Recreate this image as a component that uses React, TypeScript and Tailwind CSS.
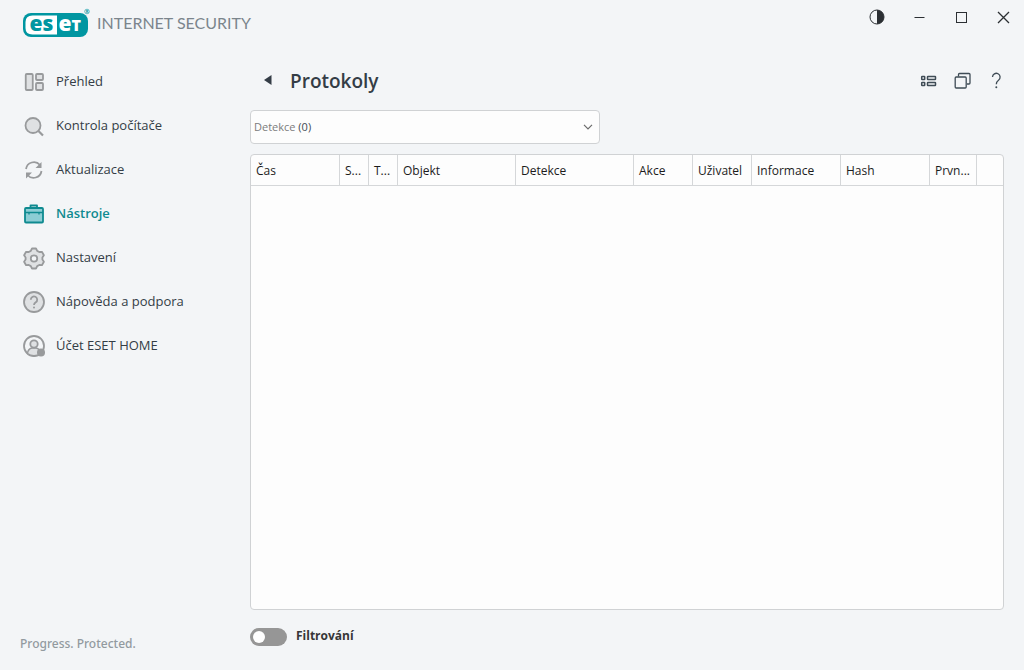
import { useState, type ReactNode } from 'react';

const icons = {
  overview: (
    <>
      <rect x="2.75" y="3" width="7" height="16" rx="1" />
      <rect x="13" y="3" width="7" height="6" rx="1" />
      <rect x="13" y="12" width="7" height="7" rx="1" />
    </>
  ),
  scan: (
    <>
      <circle cx="10" cy="10.5" r="7.5" />
      <path d="M15.5 16l4.500 4.500" strokeWidth="2.200" />
    </>
  ),
  update: (
    <>
      <path d="M3 10A8 8 0 0 1 17 6M18.500 12A8 8 0 0 1 4.500 16" fill="none" />
      <path d="M18.500 3v6h-6zM3 19.500V13.500H9z" fill="currentColor" stroke="none" />
    </>
  ),
  tools: (
    <>
      <path d="M7.500 5V2.500h6.500V5" fill="none" />
      <rect x="2" y="5" width="18" height="14.500" rx="1" />
      <path d="M2 9.500h18M6 9v2.500M16 9v2.500" fill="none" strokeWidth="1.300" />
    </>
  ),
  setup: (
    <>
      <path d="M9 1.500h4l1.200 2.400 2 1.100 2.700-.200 2 3.500-1.500 2.200v2l1.500 2.200-2 3.500-2.700-.200-2 1.100L13 21.500H9l-1.200-2.400-2-1.100-2.700.200-2-3.500 1.500-2.200v-2L1.100 8.300l2-3.500 2.700.200 2-1.100z" />
      <circle cx="11" cy="11.500" r="3.200" className="fill-[#f3f5f7]" />
    </>
  ),
  help: (
    <>
      <circle cx="11" cy="11" r="10" />
      <path d="M7.800 8.700a3.200 3.200 0 1 1 5 2.600c-1.200.800-1.800 1.300-1.800 2.600" fill="none" />
      <circle cx="11" cy="16.500" r="1" fill="currentColor" stroke="none" />
    </>
  ),
  account: (
    <>
      <circle cx="11" cy="11" r="10" fill="none" />
      <path d="M4.500 18.500c.300-3.500 2.300-5 4.500-5.500h4c2.200.500 4.200 2 4.500 5.500-3.500 3-9.500 3-13 0z" strokeWidth="1.400" />
      <circle cx="11" cy="9" r="3.700" />
      <circle cx="18" cy="17.500" r="4" fill="currentColor" stroke="none" />
    </>
  ),
};

type IconName = keyof typeof icons;

const navItems: { label: string; icon: IconName }[] = [
  { label: 'Přehled', icon: 'overview' },
  { label: 'Kontrola počítače', icon: 'scan' },
  { label: 'Aktualizace', icon: 'update' },
  { label: 'Nástroje', icon: 'tools' },
  { label: 'Nastavení', icon: 'setup' },
  { label: 'Nápověda a podpora', icon: 'help' },
  { label: 'Účet ESET HOME', icon: 'account' },
];

const columns = [
  { label: 'Čas', width: 'w-[89px]' },
  { label: 'S...', width: 'w-[29px]' },
  { label: 'T...', width: 'w-[29px]' },
  { label: 'Objekt', width: 'w-[118px]' },
  { label: 'Detekce', width: 'w-[118px]' },
  { label: 'Akce', width: 'w-[59px]' },
  { label: 'Uživatel', width: 'w-[59px]' },
  { label: 'Informace', width: 'w-[89px]' },
  { label: 'Hash', width: 'w-[89px]' },
  { label: 'Prvn...', width: 'w-[47px]' },
];

const NavIcon = ({ name, active }: { name: IconName; active: boolean }) => (
  <svg
    viewBox="0 0 22 22"
    className={active ? 'size-[22px] shrink-0 overflow-visible fill-[#8ccdd4]' : 'size-[22px] shrink-0 overflow-visible fill-[#dfe1e3]'}
    stroke="currentColor"
    strokeWidth="1.800"
    strokeLinejoin="round"
    aria-hidden="true"
  >
    {icons[name]}
  </svg>
);

const Logo = () => (
  <svg viewBox="0 0 68 30" className="h-[30px] w-[68px]" role="img" aria-label="ESET">
    <rect x="0" y="5" width="65" height="24" rx="8" fill="#0096a1" />
    <path d="M34 7.500H9.500Q2.500 7.500 2.500 14v6q0 6.500 7 6.500H34z" fill="#fff" />
    <text x="6.500" y="23" fontSize="21" fontWeight="800" fill="#0096a1">es</text>
    <text x="35.500" y="23" fontSize="21" fontWeight="800" fill="#fff">
      e<tspan fontSize="16">T</tspan>
    </text>
    <circle cx="64" cy="3.500" r="2.300" fill="none" stroke="#0096a1" strokeWidth="0.600" />
    <text x="62.700" y="5" fontSize="4" fontWeight="700" fill="#0096a1">R</text>
  </svg>
);

const IconButton = ({ label, className, children }: { label: string; className: string; children: ReactNode }) => (
  <button type="button" aria-label={label} className={`flex items-center justify-center ${className}`}>
    <svg viewBox="0 0 18 18" className="size-[18px] overflow-visible" fill="none" stroke="currentColor" strokeWidth="1.300" aria-hidden="true">
      {children}
    </svg>
  </button>
);

const Header = () => (
  <header className="flex h-[60px] items-start justify-between">
    <div className="flex items-center gap-[6px] pt-2 pl-[23px]">
      <Logo />
      <span className="font-['Lato'] text-base leading-[30px] text-[#7b858c]">INTERNET SECURITY</span>
    </div>
    <div className="flex text-[#2b2f33]">
      <IconButton label="Kontrast" className="h-[34px] w-[42px]">
        <circle cx="9" cy="9" r="7" strokeWidth="1" />
        <path d="M9 2a7 7 0 0 1 0 14z" fill="currentColor" stroke="none" />
      </IconButton>
      <IconButton label="Minimalizovat" className="h-[34px] w-[42px]">
        <path d="M4.500 9.500h10" strokeWidth="1" />
      </IconButton>
      <IconButton label="Maximalizovat" className="h-[34px] w-[42px]">
        <rect x="4.500" y="4.500" width="10" height="10" strokeWidth="1" />
      </IconButton>
      <IconButton label="Zavřít" className="h-[34px] w-[42px]">
        <path d="M4 4l11 11M15 4L4 15" />
      </IconButton>
    </div>
  </header>
);

const Sidebar = ({ active, onSelect }: { active: string; onSelect: (label: string) => void }) => (
  <aside className="flex w-[250px] shrink-0 flex-col justify-between">
    <nav>
      {navItems.map((item) => {
        const isActive = item.label === active;
        return (
          <a
            key={item.label}
            href="#"
            onClick={() => onSelect(item.label)}
            aria-current={isActive ? 'page' : undefined}
            className={`flex h-11 items-center gap-[11px] pl-[23px] text-[13px] ${isActive ? 'font-semibold text-[#0e8a90]' : 'text-[#343d46]'}`}
          >
            <span className={isActive ? 'text-[#0e8a90]' : 'text-[#989a9c]'}>
              <NavIcon name={item.icon} active={isActive} />
            </span>
            {item.label}
          </a>
        );
      })}
    </nav>
    <p className="pb-[17px] pl-5 font-['Noto_Sans',sans-serif] text-xs leading-[18px] font-medium text-[#929a9f]">Progress. Protected.</p>
  </aside>
);

const LogTable = () => (
  <div className="mt-[10px] flex-1 overflow-hidden rounded border border-[#d0d2d4] bg-[#fdfdfd]">
    <table className="w-full table-fixed border-separate border-spacing-0 text-xs text-[#1c1c1c]">
      <thead>
        <tr className="h-[31px]">
          {columns.map((column) => (
            <th key={column.label} scope="col" className={`${column.width} border-r border-b border-[#d5d7d9] px-[5px] pt-[2px] text-left font-normal whitespace-nowrap`}>
              {column.label}
            </th>
          ))}
          <td className="border-b border-[#d5d7d9]" />
        </tr>
      </thead>
    </table>
  </div>
);

export default function App() {
  const [active, setActive] = useState('Nástroje');
  const [filtering, setFiltering] = useState(false);

  return (
    <div className="flex min-h-screen flex-col bg-[#f3f5f7] font-['Open_Sans','Noto_Sans',sans-serif]">
      <Header />
      <div className="flex flex-1">
        <Sidebar active={active} onSelect={setActive} />

        <main className="flex min-w-0 flex-1 flex-col pr-5">
          <div className="flex h-[42px] items-center justify-between">
            <div className="flex items-center text-[#343d46]">
              <button type="button" aria-label="Zpět" className="flex h-8 w-10 items-center pl-[14px]">
                <svg viewBox="0 0 8 12" className="h-3 w-2" aria-hidden="true">
                  <path d="M7.500 0v10L0 5z" fill="currentColor" />
                </svg>
              </button>
              <h1 className="text-[19px] leading-7 font-semibold">Protokoly</h1>
            </div>
            <div className="flex gap-4 text-[#3f4c56]">
              <IconButton label="Zobrazení" className="size-[18px]">
                <g strokeWidth="1.500">
                  <rect x="3.700" y="4.500" width="3" height="3" rx="0.500" />
                  <rect x="9.500" y="4.500" width="8" height="3" rx="0.500" />
                  <rect x="3.700" y="10.500" width="3" height="3" rx="0.500" />
                  <rect x="9.500" y="10.500" width="8" height="3" rx="0.500" />
                </g>
              </IconButton>
              <IconButton label="Kopírovat" className="size-[18px]">
                <path d="M6.500 4.500V2.500q0-1 1-1h9.500q1 0 1 1V11q0 1-1 1h-2" />
                <rect x="3.200" y="5" width="11" height="11" rx="1" />
              </IconButton>
              <IconButton label="Nápověda" className="size-[18px]">
                <path d="M6.500 5a3.800 3.800 0 1 1 6 3.200c-1.600 1.200-2.200 1.800-2.200 4" />
                <circle cx="10.300" cy="15.300" r="1" fill="currentColor" stroke="none" />
              </IconButton>
            </div>
          </div>

          <div className="mt-2 grid w-[350px] max-w-full items-center text-[11px]">
            <select
              aria-label="Protokol"
              className="col-start-1 row-start-1 h-[34px] w-full appearance-none rounded border border-[#d0d2d4] bg-[#fdfdfd] px-[3px] text-transparent"
            >
              <option>Detekce (0)</option>
            </select>
            <div className="pointer-events-none col-start-1 row-start-1 flex items-center justify-between pr-[7px] pl-1 text-[#3f4c56]" aria-hidden="true">
              <span>
                <span className="text-[#7c7c7c]">Detekce</span> (0)
              </span>
              <svg viewBox="0 0 10 6" className="h-[6px] w-[10px]" fill="none" stroke="#6b6b6b" strokeWidth="1.200">
                <path d="M1 .8l4 4 4-4" />
              </svg>
            </div>
          </div>

          <LogTable />

          <label className="flex h-[60px] items-center gap-[9px] pb-[7px] text-xs font-bold text-[#363636]">
            <input
              type="checkbox"
              role="switch"
              checked={filtering}
              onChange={(e) => setFiltering(e.target.checked)}
              className="flex h-[18px] w-[37px] appearance-none items-center rounded-full bg-[#969696] px-[3px] before:size-3 before:rounded-full before:bg-white checked:justify-end checked:bg-[#0096a1]"
            />
            <span className="pb-[2px]">Filtrování</span>
          </label>
        </main>
      </div>
    </div>
  );
}
